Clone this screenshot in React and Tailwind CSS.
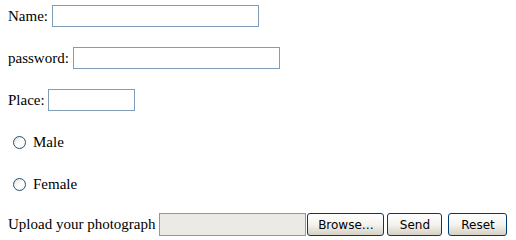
export default function App() {
  const serif = { fontFamily: '"Liberation Serif", "Times New Roman", serif' };
  const sans = { fontFamily: '"DejaVu Sans", Tahoma, sans-serif', fontSize: '12px' };
  const inputCls = 'shrink-0 h-[22px] border border-[#7f9db9] bg-white outline-none';
  const btnCls =
    'shrink-0 h-[23px] rounded-[3px] border border-[#003c74] bg-gradient-to-b from-white via-[#f4f3ee] to-[#d6d0c5] leading-none text-black flex items-center justify-center';
  const radioCls =
    'shrink-0 ml-[5px] w-[13px] h-[13px] rounded-full border border-[#1c5180] bg-gradient-to-br from-[#dcdcd7] via-white to-[#f6f6f4]';

  return (
    <div className="min-h-screen bg-white text-black text-[15px] pl-2 pt-[5px] whitespace-nowrap" style={serif}>
      <div className="flex items-center h-[22px]">
        <span>Name:</span>
        <input type="text" className={`${inputCls} ml-[4px] w-[207px]`} />
      </div>

      <div className="flex items-center h-[22px] mt-[20px]">
        <span>password:</span>
        <input type="password" className={`${inputCls} ml-[4px] w-[207px]`} />
      </div>

      <div className="flex items-center h-[22px] mt-[20px]">
        <span>Place:</span>
        <input type="text" className={`${inputCls} ml-[3px] w-[87px]`} />
      </div>

      <div className="flex items-center h-[22px] mt-[20px]">
        <span className={radioCls} />
        <span className="ml-[7px]">Male</span>
      </div>

      <div className="flex items-center h-[22px] mt-[20px]">
        <span className={radioCls} />
        <span className="ml-[7px]">Female</span>
      </div>

      <div className="flex items-center h-[23px] mt-[18px]">
        <span>Upload your photograph</span>
        <span className="shrink-0 ml-[4px] w-[147px] h-[23px] border border-[#7f9db9] bg-[#ebeae5]" />
        <button className={`${btnCls} ml-[1px] w-[77px]`} style={sans}>
          Browse…
        </button>
        <button className={`${btnCls} ml-[3px] w-[55px]`} style={sans}>
          Send
        </button>
        <button className={`${btnCls} ml-[6px] w-[59px]`} style={sans}>
          Reset
        </button>
      </div>
    </div>
  );
}
